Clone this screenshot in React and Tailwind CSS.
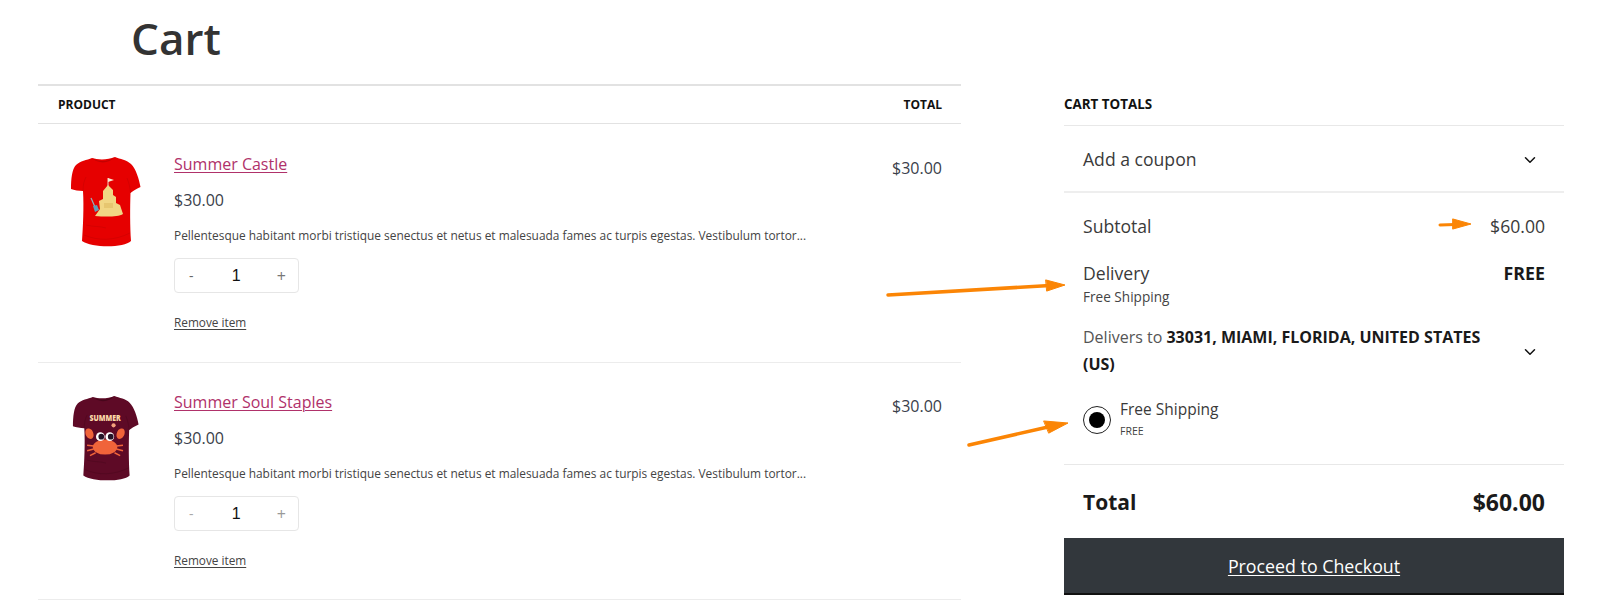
import React from "react";
import { ChevronDown } from "lucide-react";

const DESC = "Pellentesque habitant morbi tristique senectus et netus et malesuada fames ac turpis egestas. Vestibulum tortor...";

function Shirt({ color, dark, size, children }) {
  return (
    <svg viewBox="0 0 72 92" className={size}>
      <path
        d="M22 1 C28 3 38 3 45 0 C50 2 57 3 61 7 C66 12 69 22 70.5 30 C66 32 63 34 60.5 36 C60 50 60 70 61 84 C54 91 22 91 12 84 C13 70 14 50 13 34 C9 34 4 33 1 32 C1 22 2 12 6 8 C10 4 17 3 22 1 Z"
        fill={color}
      />
      <path d="M22 1 C28 5 38 5 45 0 C39 7 28 7 22 1 Z" fill={dark} />
      <path d="M13 34 C13 28 14 24 16 20 M60.5 36 C60 30 59 26 57 21 M14 78 C28 84 44 84 60 76 M16 68 C24 70 30 69 36 71" stroke={dark} strokeWidth="0.8" fill="none" opacity="0.6" />
      {children}
    </svg>
  );
}

function Castle() {
  return (
    <g>
      <path d="M38 21 V29" stroke="#f3ead8" strokeWidth="0.9" />
      <path d="M38 21 L44 23 L38 25 Z" fill="#f7ead2" />
      <path d="M38 28 L43 33 V38 L46 40 V46 L50 48 L53 57 C48 60 36 60 25 59 L30 52 L29 44 L33 42 V34 Z" fill="#f1d684" />
      <path d="M21 41 L25 50" stroke="#8fb3bf" strokeWidth="1.2" />
      <path d="M23 49 L27 48 L29 53 L25 55 Z" fill="#5f9db8" />
      <path d="M34 46 H43 V51 H34 Z" fill="#e6c670" />
    </g>
  );
}

function Crab() {
  return (
    <g>
      <text x="35" y="26" textAnchor="middle" fontSize="10" fontWeight="800" textLength="33" lengthAdjust="spacingAndGlyphs" fill="#fcd9a8" fontFamily="Open Sans, sans-serif">SUMMER</text>
      <ellipse cx="35" cy="54" rx="13" ry="8" fill="#f0643a" />
      <path d="M21 36 C13 30 12 42 18 45 C22 47 25 42 21 36 Z M49 36 C57 30 58 42 52 45 C48 47 45 42 49 36 Z" fill="#f0643a" />
      <circle cx="30" cy="43" r="4.6" fill="#fff" />
      <circle cx="40" cy="43" r="4.6" fill="#fff" />
      <circle cx="31" cy="43" r="3" fill="#241428" />
      <circle cx="41" cy="43" r="3" fill="#241428" />
      <path d="M23 53 L16 52 M23 56 L16 58 M25 60 L19 63 M47 53 L54 52 M47 56 L54 58 M45 60 L51 63" stroke="#f0643a" strokeWidth="1.6" />
      <circle cx="44" cy="31" r="2.2" fill="#f5a27c" />
    </g>
  );
}

function CartRow({ name, art, qtyMuted, rowClass, bodyClass, priceClass, artClass }) {
  return (
    <div className={`flex border-b border-[#ececec] ${rowClass}`}>
      <div className={`w-[136px] shrink-0 ${artClass}`}>{art}</div>
      <div className={`flex-1 ${bodyClass}`}>
        <a className="block text-[16px] leading-[24px] underline underline-offset-2 decoration-1 text-[#b0316a]">{name}</a>
        <div className="mt-[12px] text-[16px] leading-[24px] text-[#3a404a]">$30.00</div>
        <div className="mt-[13px] text-[11.9px] leading-[20px] text-[#444] whitespace-nowrap">{DESC}</div>
        <div className="mt-[13px] w-[125px] h-[35px] border border-[#e6e6e6] rounded-[4px] flex items-center justify-between pl-[14px] pr-[12px]">
          <span className={`text-[14px] ${qtyMuted ? "text-[#a8a8a8]" : "text-[#666]"}`}>-</span>
          <span className="text-[16px] font-['Liberation_Sans',sans-serif] text-[#111] ml-[2px]">1</span>
          <span className={`text-[16px] ${qtyMuted ? "text-[#999]" : "text-[#777]"}`}>+</span>
        </div>
        <a className="block mt-[19px] text-[11.8px] leading-[20px] text-[#444] underline underline-offset-2">Remove item</a>
      </div>
      <div className={`w-[100px] shrink-0 pr-[19px] text-right text-[16px] leading-[24px] text-[#3a404a] ${priceClass}`}>$30.00</div>
    </div>
  );
}

export default function App() {
  return (
    <div className="relative w-[1600px] h-[616px] overflow-hidden bg-white font-['Open_Sans','Noto_Sans',sans-serif] text-[#2b2b2b]">
      <h1 className="h-[84px] pl-[131px] pt-[6px] text-[44px] leading-[64px] font-semibold text-[#333]">Cart</h1>
      <div className="flex pl-[38px]">
        <section className="w-[923px] shrink-0">
          <div className="h-[40px] border-t-2 border-b border-[#e2e2e2] flex items-center justify-between pl-[20px] pr-[19px] text-[12px] font-bold text-[#111]">
            <span>PRODUCT</span>
            <span>TOTAL</span>
          </div>
          <CartRow
            name="Summer Castle"
            rowClass="h-[239px]"
            bodyClass="pt-[28px]"
            priceClass="pt-[32px]"
            artClass="pt-[33px] pl-[32px]"
            art={<Shirt size="w-[72px] h-[92px]" color="#e60000" dark="#c40000"><Castle /></Shirt>}
          />
          <CartRow
            qtyMuted
            name="Summer Soul Staples"
            rowClass="h-[237px]"
            bodyClass="pt-[27px]"
            priceClass="pt-[31px]"
            artClass="pt-[33px] pl-[34px]"
            art={<Shirt size="w-[68px] h-[87px]" color="#5e0a26" dark="#47061b"><Crab /></Shirt>}
          />
        </section>
        <aside className="w-[500px] shrink-0 ml-[103px]">
          <div className="h-[42px] flex items-center border-b border-[#e8e8e8] text-[13.4px] font-bold text-[#111]">CART TOTALS</div>
          <div className="h-[67px] pt-[2px] px-[19px] flex items-center justify-between border-b-2 border-[#eeeeee] text-[17.6px] text-[#3a3a3a]">
            <span>Add a coupon</span>
            <ChevronDown size={18} className="text-[#111] mr-[6px]" />
          </div>
          <div className="px-[19px] border-b border-[#e8e8e8] h-[272px]">
            <div className="pt-[19px] flex justify-between text-[17.6px] leading-[28px] text-[#3a3a3a]">
              <span>Subtotal</span>
              <span>$60.00</span>
            </div>
            <div className="mt-[19px] flex justify-between">
              <div>
                <div className="text-[17.6px] leading-[28px] text-[#3a3a3a]">Delivery</div>
                <div className="text-[13.6px] leading-[20px] text-[#444]">Free Shipping</div>
              </div>
              <span className="font-bold text-[17.8px] leading-[28px] text-[#1a1a1a]">FREE</span>
            </div>
            <div className="mt-[17px] flex items-center justify-between">
              <div className="text-[16px] leading-[27px] text-[#555]">
                <div>Delivers to <b className="font-bold text-[#1a1a1a]">33031, MIAMI, FLORIDA, UNITED STATES</b></div>
                <b className="block font-bold text-[#1a1a1a]">(US)</b>
              </div>
              <ChevronDown size={18} className="text-[#111] mr-[6px] mt-[2px]" />
            </div>
            <div className="mt-[19px] flex">
              <span className="mt-[9px] size-[28px] rounded-full border border-[#222] flex items-center justify-center">
                <span className="size-[16px] rounded-full bg-black" />
              </span>
              <div className="ml-[9px]">
                <div className="text-[15.5px] leading-[24px] text-[#3a3a3a]">Free Shipping</div>
                <div className="mt-[2px] text-[10.5px] leading-[16px] text-[#444]">FREE</div>
              </div>
            </div>
          </div>
          <div className="h-[73px] pt-[2px] px-[19px] flex items-center justify-between font-bold text-[#1a1a1a]">
            <span className="text-[21px]">Total</span>
            <span className="text-[23px]">$60.00</span>
          </div>
          <a className="h-[57px] pt-[2px] flex items-center justify-center bg-[#32373c] border-b-2 border-[#111] text-white text-[17.8px] underline underline-offset-2">Proceed to Checkout</a>
        </aside>
      </div>
      <svg className="absolute inset-0 w-[1600px] h-[616px] pointer-events-none" viewBox="0 0 1600 616">
        <g fill="#fb8505" stroke="#fb8505" strokeLinecap="round">
          <path d="M888 295 L1050 285.5" strokeWidth="3.5" fill="none" />
          <path d="M1046 280 L1065 285 L1047 291 Z" strokeWidth="1" />
          <path d="M969 445 L1048 427" strokeWidth="3.5" fill="none" />
          <path d="M1044 421 L1068 423 L1049 433 Z" strokeWidth="1" />
          <path d="M1440 225 L1455 224.5" strokeWidth="3" fill="none" />
          <path d="M1453 219 L1471 224 L1453 229 Z" strokeWidth="1" />
        </g>
      </svg>
    </div>
  );
}
